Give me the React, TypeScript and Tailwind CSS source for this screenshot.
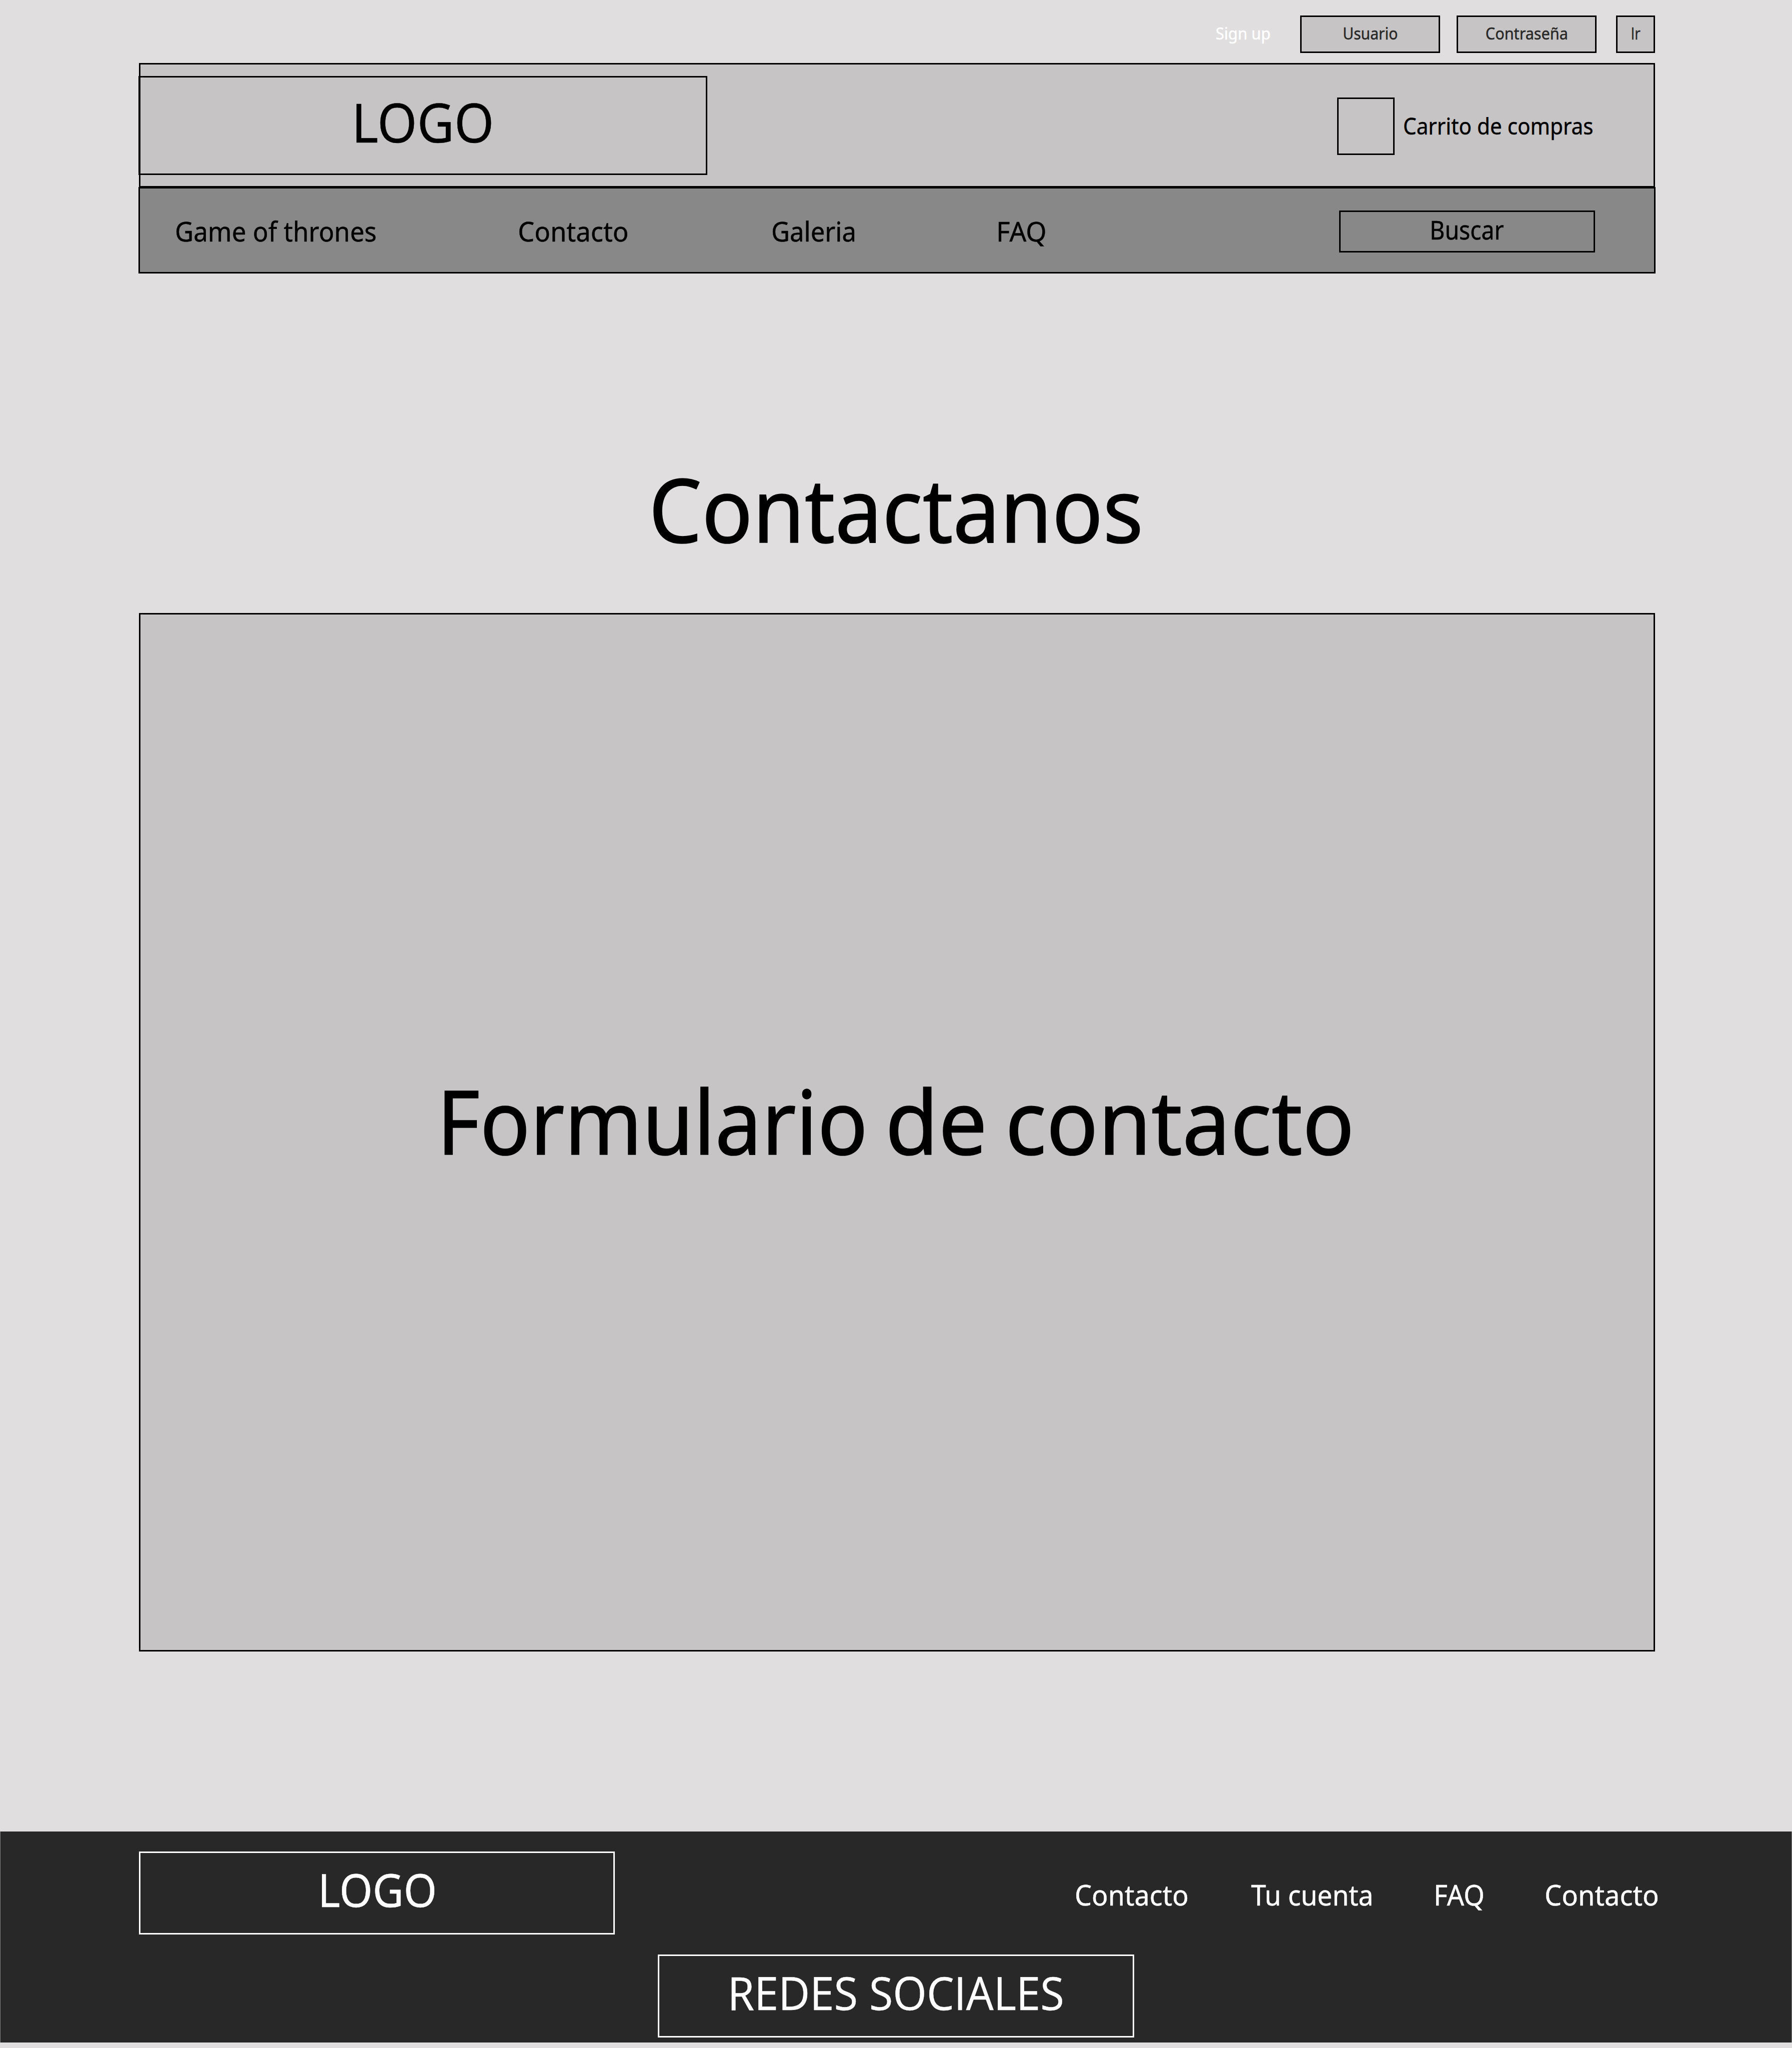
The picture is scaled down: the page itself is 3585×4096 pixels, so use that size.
import type { ReactNode } from "react";

function Label({ className, children }: { className: string; children: ReactNode }) {
  return <span className={`inline-block whitespace-nowrap leading-none ${className}`}>{children}</span>;
}

function TopBar() {
  const box = "flex h-[75px] items-center justify-center border-3 border-black bg-[#c6c4c5] pb-[5px] text-[32.4px] text-[#282828]";
  return (
    <div className="flex h-[126px] items-start justify-end pt-[31px] pr-[274px]">
      <div className="mr-[61px] flex h-[75px] w-[108.5px] items-center pb-[5px] text-[32.4px] text-white">
        <Label className="origin-left scale-x-[0.96]">Sign up</Label>
      </div>
      <div className={`${box} mr-[33px] w-[280px]`}>
        <Label className="scale-x-[0.93]">Usuario</Label>
      </div>
      <div className={`${box} mr-[39px] w-[280px]`}>
        <Label className="ml-px scale-x-[0.945]">Contraseña</Label>
      </div>
      <div className={`${box} w-[78px] font-['Open_Sans',sans-serif]`}>
        <Label className="scale-x-[0.87]">Ir</Label>
      </div>
    </div>
  );
}

function Header() {
  return (
    <header className="ml-[278px] flex h-[249px] w-[3033px] items-start border-3 border-black bg-[#c6c4c5]">
      <div className="mt-[23px] -ml-[4px] flex h-[198px] w-[1138px] items-center justify-center border-3 border-black pb-[16px]">
        <Label className="text-[108.7px] scale-x-[0.938]">LOGO</Label>
      </div>
      <div className="ml-[1260px] flex items-center self-center pt-[4px]">
        <div className="size-[115px] border-3 border-black" />
        <Label className="ml-[16.5px] -mt-px origin-left text-[45.5px] scale-x-[0.928]">Carrito de compras</Label>
      </div>
    </header>
  );
}

function Nav() {
  return (
    <nav className="-mt-px ml-[277px] grid h-[173px] w-[3035px] grid-cols-[686px_507px_450px_686px_512px] items-center border-3 border-black bg-[#888888] pl-[69.5px] text-[54.9px]">
      <Label className="mt-[4px] origin-left scale-x-[0.931]">Game of thrones</Label>
      <Label className="mt-[4px] origin-left scale-x-[0.956]">Contacto</Label>
      <Label className="mt-[4px] origin-left scale-x-[0.926]">Galeria</Label>
      <Label className="mt-[4px] origin-left scale-x-[0.966]">FAQ</Label>
      <div className="mt-[5px] flex h-[84px] items-center justify-center border-3 border-black pb-[5px] text-[50.9px]">
        <Label className="scale-x-[0.911]">Buscar</Label>
      </div>
    </nav>
  );
}

function Footer() {
  const box = "flex h-[166px] items-center justify-center border-3 border-white pb-[14px] text-[91.6px]";
  return (
    <footer className="mt-[360px] flex h-[422px] flex-col gap-[40px] border-x border-[#848384] bg-[#282828] pt-[40px] text-white">
      <div className="flex items-center pl-[277px]">
        <div className={`${box} w-[952px]`}>
          <Label className="ml-[2px] scale-x-[0.93]">LOGO</Label>
        </div>
        <div className="mt-[6px] ml-[920px] grid grid-cols-[353px_364.6px_222.5px_auto] text-[56.3px]">
          <Label className="origin-left scale-x-[0.958]">Contacto</Label>
          <Label className="origin-left scale-x-[0.947]">Tu cuenta</Label>
          <Label className="origin-left scale-x-[0.955]">FAQ</Label>
          <Label className="origin-left scale-x-[0.962]">Contacto</Label>
        </div>
      </div>
      <div className={`${box} w-[953px] self-center font-['Open_Sans',sans-serif]`}>
        <Label className="scale-x-[0.948]">REDES SOCIALES</Label>
      </div>
    </footer>
  );
}

export default function App() {
  return (
    <div className="h-[4096px] w-[3585px] overflow-hidden bg-[#e0dedf] font-['Noto_Sans',sans-serif] text-black [-webkit-text-stroke-width:0.5px]">
      <TopBar />
      <Header />
      <Nav />
      <h1 className="flex h-[679px] items-center justify-center pt-[258px] text-[178px] [-webkit-text-stroke-width:1.6px]">
        <Label className="scale-x-[0.945]">Contactanos</Label>
      </h1>
      <main className="ml-[278px] flex h-[2077px] w-[3033px] items-center border-3 border-black bg-[#c6c4c5] pb-[49px] pl-[593px] text-[178px] [-webkit-text-stroke-width:1.6px]">
        <h2 className="leading-none whitespace-nowrap">
          <Label className="mr-[-72px] origin-left scale-x-[0.934]">Formulario</Label>{" "}
          <Label className="mr-[-16.6px] origin-left scale-x-[0.972]">de</Label>{" "}
          <Label className="origin-left scale-x-[0.964]">contacto</Label>
        </h2>
      </main>
      <Footer />
    </div>
  );
}
